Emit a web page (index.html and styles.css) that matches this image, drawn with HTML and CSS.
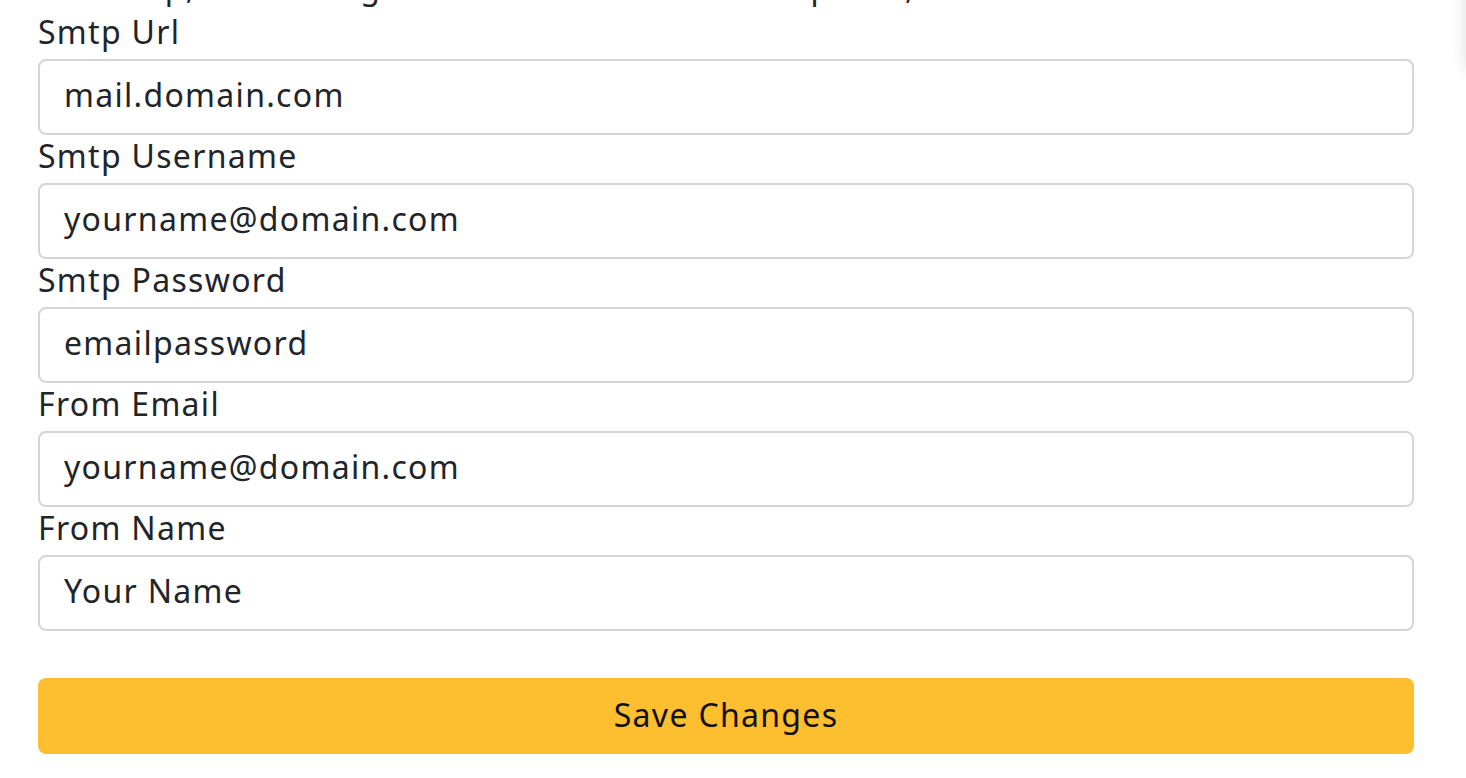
FILE: index.html
```html
<!DOCTYPE html>
<html>
<head>
<meta charset="utf-8">
<link rel="stylesheet" href="styles.css">
</head>
<body>
<div class="edge-shadow"></div>
<form class="settings">
  <p class="intro">To set up, the settings of the mail server are required, so enter them below.</p>
  <div class="field">
    <label class="label">Smtp Url</label>
    <input class="input" type="text" value="mail.domain.com">
  </div>
  <div class="field">
    <label class="label">Smtp Username</label>
    <input class="input" type="text" value="yourname@domain.com">
  </div>
  <div class="field">
    <label class="label">Smtp Password</label>
    <input class="input" type="text" value="emailpassword">
  </div>
  <div class="field">
    <label class="label">From Email</label>
    <input class="input" type="text" value="yourname@domain.com">
  </div>
  <div class="field">
    <label class="label">From Name</label>
    <input class="input" type="text" value="Your Name">
  </div>
  <button class="save" type="button">Save Changes</button>
</form>
</body>
</html>
```
FILE: styles.css
```css
html, body {
  margin: 0;
  padding: 0;
  background: #fff;
  overflow: hidden;
}
body {
  font-family: "Noto Sans", "Open Sans", sans-serif;
  color: #212529;
  position: relative;
  width: 1466px;
  height: 778px;
}
.settings {
  display: flex;
  flex-direction: column;
  width: 1376px;
  margin-left: 38px;
  letter-spacing: 1.3px;
}
.intro {
  margin: -37px 0 0 0;
  font-size: 32px;
  line-height: 47px;
  height: 48px;
  white-space: nowrap;
  overflow: hidden;
  color: #212529;
}
.field {
  display: flex;
  flex-direction: column;
}
.label {
  font-size: 32px;
  line-height: 42px;
  height: 48px;
  color: #212529;
}
.input {
  box-sizing: border-box;
  height: 76px;
  width: 100%;
  border: 2px solid #d3d5d8;
  border-radius: 8px;
  padding: 0 24px 5px 24px;
  font-family: inherit;
  font-size: 32px;
  letter-spacing: 1.3px;
  color: #212529;
  background: #fff;
  outline: none;
}
.save {
  margin-top: 47px;
  box-sizing: border-box;
  height: 76px;
  width: 100%;
  border: none;
  border-radius: 8px;
  padding-bottom: 4px;
  background: #fdbf2f;
  color: #111;
  font-family: inherit;
  font-size: 32px;
  letter-spacing: 1.3px;
  cursor: pointer;
}
.edge-shadow {
  position: absolute;
  right: -40px;
  top: -30px;
  width: 40px;
  height: 100px;
  border-radius: 8px;
  box-shadow: 0 0 16px rgba(0, 0, 0, 0.14);
  background: #fff;
}
```
